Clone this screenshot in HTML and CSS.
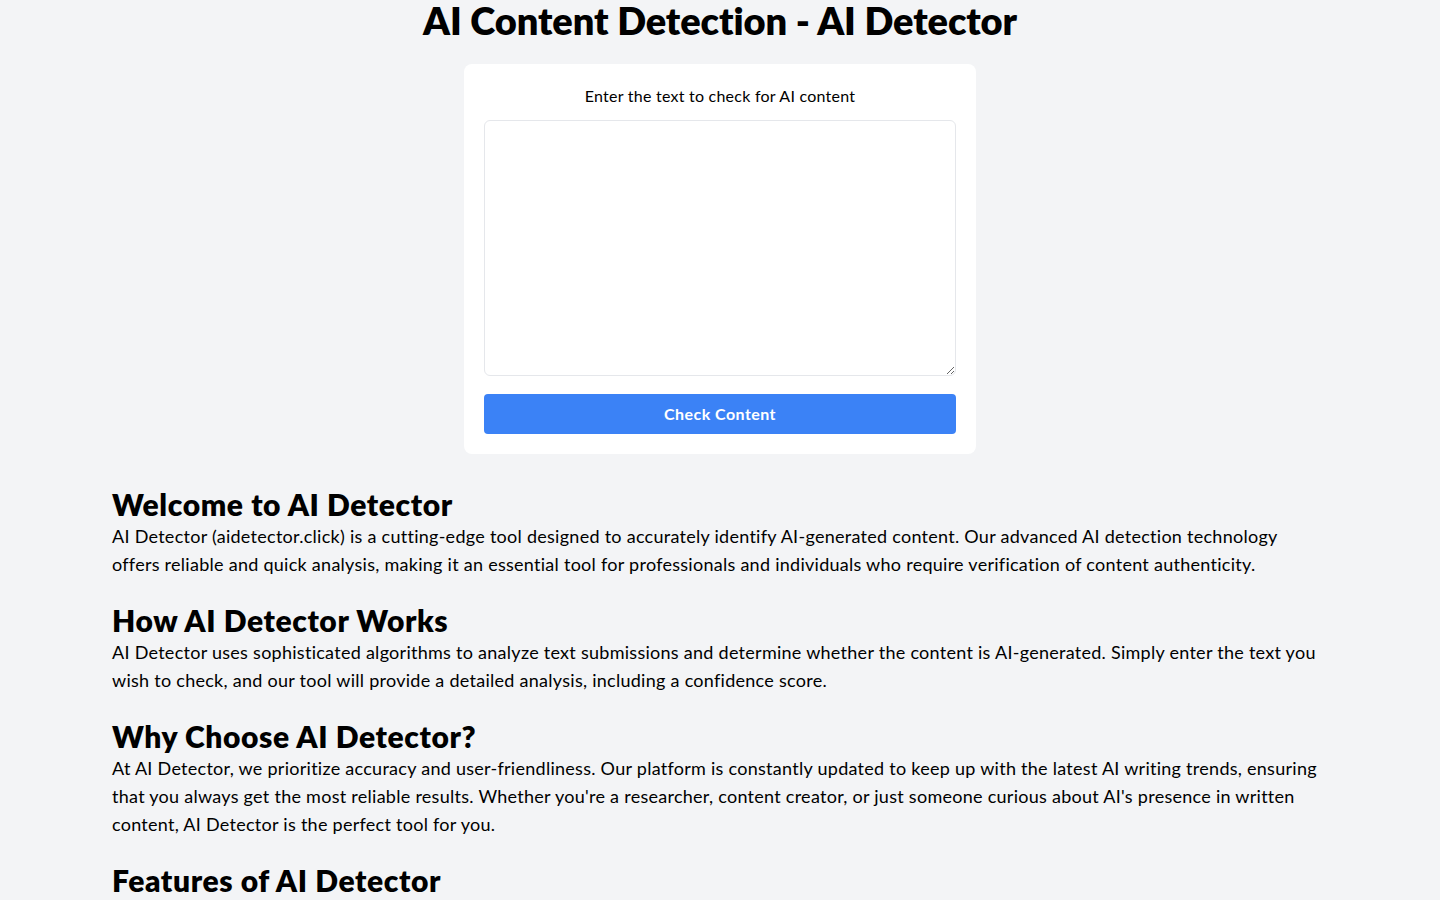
FILE: index.html
```html
<!DOCTYPE html>
<html lang="en">
<head>
<meta charset="utf-8">
<title>AI Content Detection - AI Detector</title>
<link rel="stylesheet" href="styles.css">
</head>
<body>
<main class="page">
  <h1 class="title">AI Content Detection - AI Detector</h1>
  <form class="card">
    <label class="card-label" for="text">Enter the text to check for AI content</label>
    <textarea id="text" class="card-input"></textarea>
    <button type="button" class="card-button">Check Content</button>
  </form>
  <div class="content">
    <section class="block">
      <h2 class="block-title">Welcome to AI Detector</h2>
      <p class="block-text">AI Detector (aidetector.click) is a cutting-edge tool designed to accurately identify AI-generated content. Our advanced AI detection technology offers reliable and quick analysis, making it an essential tool for professionals and individuals who require verification of content authenticity.</p>
    </section>
    <section class="block">
      <h2 class="block-title">How AI Detector Works</h2>
      <p class="block-text">AI Detector uses sophisticated algorithms to analyze text submissions and determine whether the content is AI-generated. Simply enter the text you wish to check, and our tool will provide a detailed analysis, including a confidence score.</p>
    </section>
    <section class="block">
      <h2 class="block-title">Why Choose AI Detector?</h2>
      <p class="block-text">At AI Detector, we prioritize accuracy and user-friendliness. Our platform is constantly updated to keep up with the latest AI writing trends, ensuring that you always get the most reliable results. Whether you're a researcher, content creator, or just someone curious about AI's presence in written content, AI Detector is the perfect tool for you.</p>
    </section>
    <section class="block">
      <h2 class="block-title">Features of AI Detector</h2>
      <p class="block-text">Fast and accurate AI content detection, a simple and intuitive interface, and detailed analysis with confidence scores for every submission.</p>
    </section>
  </div>
</main>
</body>
</html>
```
FILE: styles.css
```css
html, body {
  margin: 0;
  padding: 0;
}
body {
  background: #f3f4f6;
  color: #000;
  font-family: "Lato", "Open Sans", sans-serif;
}
.page {
  padding-bottom: 40px;
}
.title {
  margin: 0 0 24px;
  font-size: 38px;
  line-height: 40px;
  font-weight: 800;
  letter-spacing: -0.1px;
  text-align: center;
}
.card {
  width: 512px;
  box-sizing: border-box;
  margin: 0 auto;
  padding: 20px;
  background: #fff;
  border-radius: 8px;
}
.card-label {
  display: block;
  margin-bottom: 12px;
  font-size: 16px;
  line-height: 24px;
  letter-spacing: 0.24px;
  text-align: center;
}
.card-input {
  display: block;
  width: 100%;
  height: 256px;
  box-sizing: border-box;
  border: 1px solid #e5e7eb;
  border-radius: 6px;
  padding: 8px;
  font-family: inherit;
  font-size: 16px;
  resize: vertical;
  background: #fff;
}
.card-button {
  display: block;
  width: 100%;
  height: 40px;
  margin-top: 18px;
  padding: 0 0 2px;
  border: 0;
  border-radius: 4px;
  background: #3b82f6;
  color: #fff;
  font-family: inherit;
  font-size: 16px;
  font-weight: 700;
  letter-spacing: 0.45px;
}
.content {
  max-width: 1280px;
  box-sizing: border-box;
  margin: 32px auto 0;
  padding: 0 32px;
}
.block {
  margin-bottom: 24px;
}
.block-title {
  margin: 0;
  font-size: 30px;
  line-height: 36px;
  font-weight: 800;
  letter-spacing: 0.6px;
}
.block-text {
  margin: 0;
  font-size: 18px;
  line-height: 28px;
  letter-spacing: 0.27px;
}
```
